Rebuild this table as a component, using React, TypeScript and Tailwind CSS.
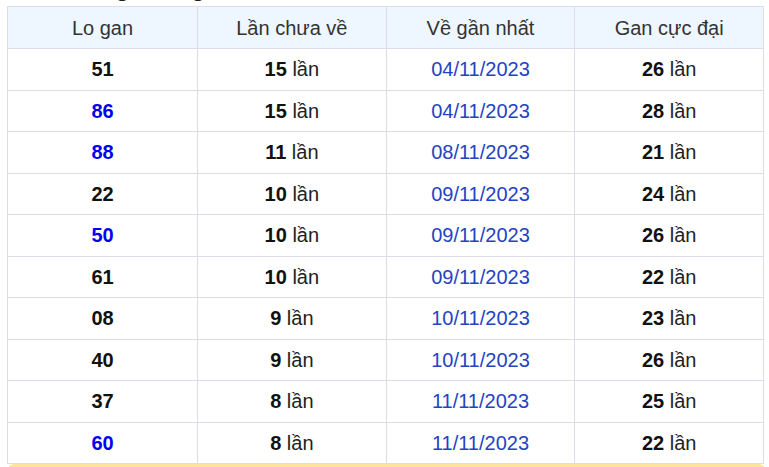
const rows = [
  { so: '51', blue: false, chua: 15, ngay: '04/11/2023', max: 26 },
  { so: '86', blue: true, chua: 15, ngay: '04/11/2023', max: 28 },
  { so: '88', blue: true, chua: 11, ngay: '08/11/2023', max: 21 },
  { so: '22', blue: false, chua: 10, ngay: '09/11/2023', max: 24 },
  { so: '50', blue: true, chua: 10, ngay: '09/11/2023', max: 26 },
  { so: '61', blue: false, chua: 10, ngay: '09/11/2023', max: 22 },
  { so: '08', blue: false, chua: 9, ngay: '10/11/2023', max: 23 },
  { so: '40', blue: false, chua: 9, ngay: '10/11/2023', max: 26 },
  { so: '37', blue: false, chua: 8, ngay: '11/11/2023', max: 25 },
  { so: '60', blue: true, chua: 8, ngay: '11/11/2023', max: 22 },
];

const App = () => {
  return (
    <div className="w-[769px] h-[467px] overflow-hidden bg-white font-['Liberation_Sans',Arial,sans-serif] text-[20px]">
      {/* heading above, scrolled out of view except descenders */}
      <div className="h-[6px] overflow-hidden">
        <p className="-mt-[24px] pl-[62px] text-[22px] leading-[26px] font-bold text-[#222] whitespace-nowrap">
          Thống kê lô gan lâu chưa ra nhất
        </p>
      </div>

      <table className="ml-[7px] w-[757px] table-fixed border-collapse border border-[#dcdee6]">
        <thead>
          <tr className="bg-[#eef6ff] h-[42px]">
            <th className="w-[190px] border border-[#dcdee6] font-normal text-[#333]">Lo gan</th>
            <th className="border border-[#dcdee6] font-normal text-[#333]">Lần chưa về</th>
            <th className="border border-[#dcdee6] font-normal text-[#333]">Về gần nhất</th>
            <th className="border border-[#dcdee6] font-normal text-[#333]">Gan cực đại</th>
          </tr>
        </thead>
        <tbody>
          {rows.map((r, i) => (
            <tr key={i} className="h-[41.5px]">
              <td className={`border border-[#dcdee6] text-center font-bold ${r.blue ? 'text-[#0000f0]' : 'text-[#111]'}`}>
                {r.so}
              </td>
              <td className="border border-[#dcdee6] text-center text-[#222]">
                <b className="text-[#111]">{r.chua}</b> lần
              </td>
              <td className="border border-[#dcdee6] text-center text-[#2443c4]">{r.ngay}</td>
              <td className="border border-[#dcdee6] text-center text-[#222]">
                <b className="text-[#111]">{r.max}</b> lần
              </td>
            </tr>
          ))}
        </tbody>
      </table>

      <div className="ml-[8px] w-[757px] h-[20px] rounded-[6px] bg-[#fde39c]" />
    </div>
  );
};

export default App;
